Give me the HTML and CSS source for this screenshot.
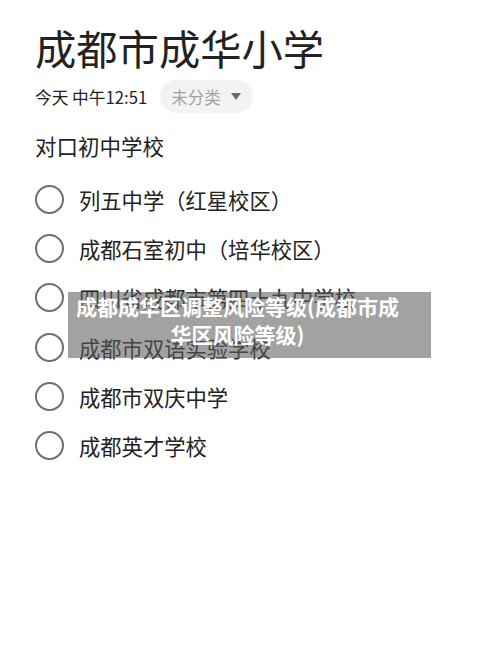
FILE: index.html
```html
<!DOCTYPE html>
<html lang="zh-CN">
<head>
<meta charset="utf-8">
<title>成都市成华小学</title>
<link rel="stylesheet" href="styles.css">
</head>
<body>
<div class="page">
  <h1 class="title">成都市成华小学</h1>
  <div class="meta">
    <span class="time">今天 中午12:51</span>
    <span class="pill">未分类<span class="caret"></span></span>
  </div>
  <div class="section">对口初中学校</div>
  <ul class="list">
    <li class="item"><span class="radio"></span><span class="label">列五中学（红星校区）</span></li>
    <li class="item"><span class="radio"></span><span class="label">成都石室初中（培华校区）</span></li>
    <li class="item"><span class="radio"></span><span class="label">四川省成都市第四十九中学校</span></li>
    <li class="item"><span class="radio"></span><span class="label">成都市双语实验学校</span></li>
    <li class="item"><span class="radio"></span><span class="label">成都市双庆中学</span></li>
    <li class="item"><span class="radio"></span><span class="label">成都英才学校</span></li>
  </ul>
  <div class="overlay">成都成华区调整风险等级(成都市成华区风险等级)</div>
</div>
</body>
</html>
```
FILE: styles.css
```css
html, body {
  margin: 0;
  padding: 0;
  background: #ffffff;
}
body {
  font-family: "Noto Sans CJK SC", "Noto Sans", sans-serif;
  color: #222222;
}
.page {
  position: relative;
  width: 500px;
  height: 652px;
  padding: 23px 0 0 35px;
  box-sizing: border-box;
}
.title {
  margin: 0;
  font-size: 41.3px;
  font-weight: 400;
  line-height: 48px;
  height: 48px;
  letter-spacing: 0;
}
.meta {
  margin-top: 9px;
  display: flex;
  align-items: center;
  height: 33px;
}
.time {
  font-size: 16.7px;
  color: #222;
}
.pill {
  margin-left: 13px;
  height: 33px;
  width: 93px;
  box-sizing: border-box;
  padding-left: 11px;
  border-radius: 17px;
  background: #f3f3f3;
  display: flex;
  align-items: center;
  font-size: 16.5px;
  color: #a3a3a3;
}
.caret {
  margin-left: 10px;
  width: 0;
  height: 0;
  border-left: 5px solid transparent;
  border-right: 5px solid transparent;
  border-top: 7px solid #6a6a6a;
}
.section {
  margin-top: 18px;
  font-size: 21.5px;
  line-height: 30px;
}
.list {
  list-style: none;
  margin: 14px 0 0 0;
  padding: 0;
}
.item {
  height: 49.2px;
  display: flex;
  align-items: center;
}
.radio {
  width: 29px;
  height: 29px;
  box-sizing: border-box;
  border: 2px solid #6f6f6f;
  border-radius: 50%;
  flex: none;
}
.label {
  margin-left: 15px;
  font-size: 21.3px;
  color: #222;
}
.overlay {
  position: absolute;
  left: 68px;
  top: 292px;
  width: 363px;
  height: 66px;
  box-sizing: border-box;
  padding: 0 28px 0 4px;
  background: rgba(95, 95, 95, 0.58);
  color: #ffffff;
  font-weight: 700;
  font-size: 21px;
  line-height: 28px;
  text-align: center;
}
```
